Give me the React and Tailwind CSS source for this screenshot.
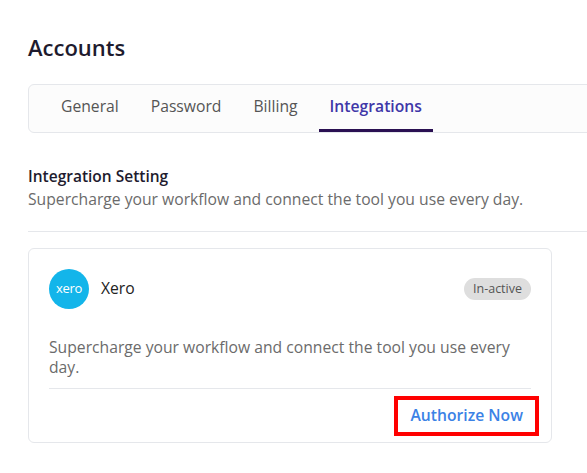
export default function App() {
  const tabs = ["General", "Password", "Billing", "Integrations"];
  return (
    <div className="min-h-screen bg-white overflow-hidden pl-7 pt-[30px] text-[#1e1b2e]" style={{ fontFamily: '"Open Sans", sans-serif' }}>
      <h1 className="text-[22px] font-semibold leading-[34px]">Accounts</h1>

      <div className="mt-[20px] w-[600px] h-[49px] border border-gray-200 rounded-md bg-[#fcfcfc] flex items-stretch pl-[21px] gap-[10px]">
        {tabs.map((t) => (
          <div
            key={t}
            className={
              "px-[11px] flex items-center text-[15.7px] border-b-[3px] " +
              (t === "Integrations"
                ? "border-[#2a1052] text-[#3f37a8] font-semibold"
                : "border-transparent text-[#555]")
            }
          >
            {t}
          </div>
        ))}
      </div>

      <div className="mt-[32px]">
        <h2 className="text-[15.5px] font-semibold leading-[22px]">Integration Setting</h2>
        <p className="text-[15.7px] text-[#6b6b6b] leading-[24px]">
          Supercharge your workflow and connect the tool you use every day.
        </p>
      </div>

      <div className="mt-[20px] w-[600px] border-t border-gray-200" />

      <div className="mt-[16px] w-[524px] border border-gray-200 rounded-md px-5 pt-5 pb-[6px]">
        <div className="flex items-center">
          <div className="w-10 h-10 rounded-full bg-[#13b5ea] flex items-center justify-center text-white text-[13px] tracking-tight">
            xero
          </div>
          <span className="ml-3 text-[15.7px] text-[#222]">Xero</span>
          <span className="ml-auto bg-[#dedede] text-[#555] text-[12.5px] rounded-full px-[9px] py-[2px]">In-active</span>
        </div>
        <p className="mt-[28px] text-[15.7px] text-[#6b6b6b] leading-[20px] pr-4">
          Supercharge your workflow and connect the tool you use every day.
        </p>
        <div className="mt-[11px] border-t border-gray-200" />
        <div className="flex justify-end -mr-2 mt-[7px]">
          <button className="border-[4px] border-[#ff0000] px-3 h-[40px] text-[15.7px] font-semibold text-[#3b82e6]">
            Authorize Now
          </button>
        </div>
      </div>
    </div>
  );
}
